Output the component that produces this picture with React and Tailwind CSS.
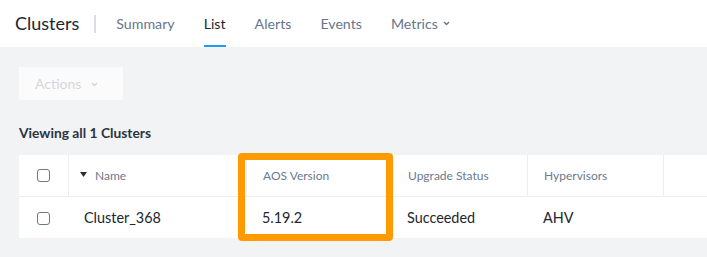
import React from "react";

const tabs = ["Summary", "List", "Alerts", "Events", "Metrics"];

function Checkbox() {
  return <div className="w-[13px] h-[13px] rounded-[3px] border-[1.5px] border-[#6b7a8f] bg-white" />;
}

function Chevron({ className = "" }) {
  return (
    <svg width="7" height="5" viewBox="0 0 7 5" className={className} fill="none" stroke="currentColor" strokeWidth="1.4">
      <path d="M1 1l2.5 2.5L6 1" />
    </svg>
  );
}

export default function App() {
  return (
    <div className="w-[707px] h-[257px] overflow-hidden bg-[#f2f3f5] font-['Lato',sans-serif]">
      {/* Top bar */}
      <div className="h-[47px] bg-white flex items-stretch pl-[15px]">
        <div className="flex items-center text-[18px] text-[#22272e]">Clusters</div>
        <div className="flex items-center ml-[15px] mr-[20px]">
          <div className="w-[2px] h-[18px] bg-[#dadde2]" />
        </div>
        <div className="flex items-stretch gap-[29px]">
          {tabs.map((t) => (
            <div
              key={t}
              className={
                t === "List"
                  ? "flex items-center gap-[5px] border-y-2 border-t-transparent border-b-[#1f9bef] text-[14.2px] text-[#22272e]"
                  : "flex items-center gap-[5px] border-y-2 border-transparent text-[14.2px] text-[#66768c]"
              }
            >
              {t}
              {t === "Metrics" && <Chevron />}
            </div>
          ))}
        </div>
      </div>

      {/* Content */}
      <div className="pl-[19px]">
        <div className="mt-[20px] w-[104px] h-[33px] bg-[#fbfbfc] flex items-center pl-[16px] gap-[10px] text-[14px] text-[#d3d7dd]">
          Actions
          <Chevron className="mt-[1px]" />
        </div>

        <div className="mt-[25px] text-[13.8px] font-bold text-[#2c3341] leading-[16px]">Viewing all 1 Clusters</div>

        <div className="relative mt-[14px] w-[700px] bg-white">
          {/* Header row */}
          <div className="flex h-[42px] border-b border-[#eceef1] text-[12px] text-[#6b7a8f]">
            <div className="w-[49px] flex items-center justify-center">
              <Checkbox />
            </div>
            <div className="w-[178px] flex items-center pl-[11px] border-l border-[#eceef1]">
              <svg width="7" height="5" viewBox="0 0 7 5" className="mr-[8px] mb-[2px]">
                <path d="M0 0h7L3.5 5z" fill="#2a2f38" />
              </svg>
              Name
            </div>
            <div className="w-[145px] flex items-center pl-[16px] border-l border-[#eceef1]">AOS Version</div>
            <div className="w-[136px] flex items-center pl-[16px] border-l border-[#eceef1]">Upgrade Status</div>
            <div className="w-[136px] flex items-center pl-[16px] border-l border-[#eceef1]">Hypervisors</div>
            <div className="flex-1 border-l border-[#eceef1]" />
          </div>

          {/* Data row */}
          <div className="flex h-[41px] pt-[1px] text-[14.4px] text-[#22272e]">
            <div className="w-[49px] flex items-center justify-center">
              <Checkbox />
            </div>
            <div className="w-[178px] flex items-center pl-[16px]">Cluster_368</div>
            <div className="w-[145px] flex items-center pl-[16px]">5.19.2</div>
            <div className="w-[136px] flex items-center pl-[16px]">Succeeded</div>
            <div className="w-[136px] flex items-center pl-[16px]">AHV</div>
            <div className="flex-1" />
          </div>

          {/* Highlight annotation */}
          <div className="absolute left-[219px] top-[-2px] w-[155px] h-[88px] border-[7px] border-[#ff9a00] rounded-[4px]" />
        </div>
      </div>
    </div>
  );
}
